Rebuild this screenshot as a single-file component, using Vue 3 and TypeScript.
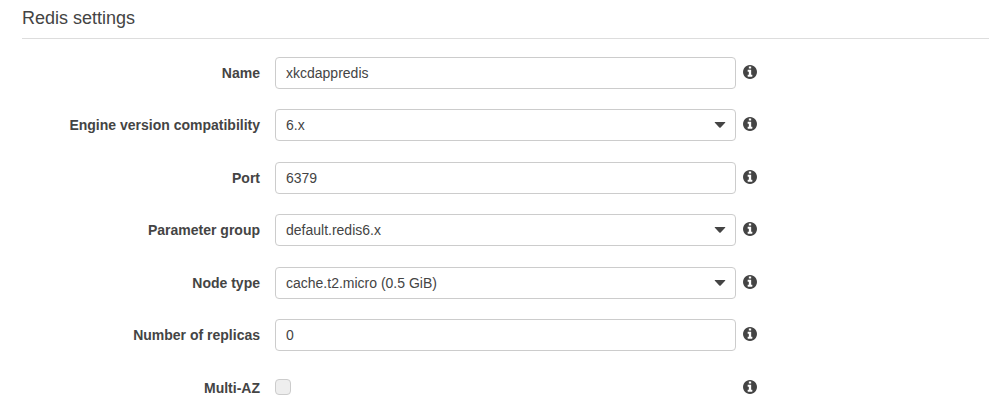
<script setup lang="ts">
import { reactive } from 'vue'

interface Field {
  id: string
  label: string
  kind: 'text' | 'select' | 'checkbox'
  options?: string[]
}

const fields: Field[] = [
  { id: 'name', label: 'Name', kind: 'text' },
  { id: 'engine', label: 'Engine version compatibility', kind: 'select', options: ['6.x'] },
  { id: 'port', label: 'Port', kind: 'text' },
  { id: 'group', label: 'Parameter group', kind: 'select', options: ['default.redis6.x'] },
  { id: 'node', label: 'Node type', kind: 'select', options: ['cache.t2.micro (0.5 GiB)'] },
  { id: 'replicas', label: 'Number of replicas', kind: 'text' },
  { id: 'multiaz', label: 'Multi-AZ', kind: 'checkbox' },
]

const values = reactive<Record<string, string>>({
  name: 'xkcdappredis',
  engine: '6.x',
  port: '6379',
  group: 'default.redis6.x',
  node: 'cache.t2.micro (0.5 GiB)',
  replicas: '0',
})
</script>

<template>
  <section class="settings">
    <h2 class="title">Redis settings</h2>
    <form class="form" @submit.prevent>
      <div v-for="field in fields" :key="field.id" class="row">
        <label :id="`${field.id}-label`" class="label" :for="field.id">{{ field.label }}</label>
        <div class="control">
          <input v-if="field.kind === 'text'" :id="field.id" v-model="values[field.id]" class="box" type="text" />
          <div v-else-if="field.kind === 'select'" class="select">
            <select :id="field.id" v-model="values[field.id]" class="box">
              <option v-for="option in field.options" :key="option">{{ option }}</option>
            </select>
            <svg class="caret" viewBox="0 0 12 6" aria-hidden="true">
              <path d="M1.2 0H10.8Q11.8 0 11.1 .8L6.7 5.5Q6 6.2 5.3 5.5L.9 .8Q.2 0 1.2 0Z" />
            </svg>
          </div>
          <input v-else :id="field.id" class="check" type="checkbox" disabled />
        </div>
        <button class="info" type="button" :aria-labelledby="`${field.id}-label`">
          <svg viewBox="0 128 1536 1536" aria-hidden="true">
            <path d="M1024 1376v-160q0-14-9-23t-23-9h-96v-512q0-14-9-23t-23-9h-320q-14 0-23 9t-9 23v160q0 14 9 23t23 9h96v320h-96q-14 0-23 9t-9 23v160q0 14 9 23t23 9h448q14 0 23-9t9-23zm-128-896v-160q0-14-9-23t-23-9h-192q-14 0-23 9t-9 23v160q0 14 9 23t23 9h192q14 0 23-9t9-23zm640 416q0 209-103 385.5t-279.5 279.5-385.5 103-385.5-103-279.5-279.5-103-385.5 103-385.5 279.5-279.5 385.5-103 385.5 103 279.5 279.5 103 385.5z" />
          </svg>
        </button>
      </div>
    </form>
  </section>
</template>

<style>
body {
  margin: 0;
  background: #fff;
}
</style>

<style scoped>
.settings {
  padding: 0 0 10px 22px;
  color: #444;
  font-family: "Liberation Sans", Arial, sans-serif;
  font-size: 14px;
  line-height: 20px;
}

.title {
  margin: 0;
  padding: 6px 0 8px;
  border-bottom: 1px solid #ddd;
  font-size: 18px;
  font-weight: 400;
  line-height: 24px;
}

.form {
  padding-top: 18px;
}

.row {
  display: grid;
  grid-template-columns: 238px minmax(0, 461px) 14px;
  align-items: center;
  min-height: 32px;
  margin-bottom: 20px;
}

.row:nth-child(even) {
  margin-bottom: 21px;
}

.label {
  font-weight: 700;
  text-align: right;
}

.control {
  display: flex;
  margin-left: 15px;
  width: 100%;
}

.box {
  box-sizing: border-box;
  width: 100%;
  height: 32px;
  margin: 0;
  padding: 0 10px;
  border: 1px solid #ccc;
  border-radius: 4px;
  background: #fff;
  color: #444;
  font: inherit;
  appearance: none;
}

.select {
  position: relative;
  width: 100%;
}

.select .box {
  display: block;
}

.caret {
  position: absolute;
  top: 13px;
  right: 10px;
  width: 12px;
  height: 6px;
  fill: #444;
  pointer-events: none;
}

.check {
  box-sizing: border-box;
  width: 16px;
  height: 16px;
  margin: 0 0 2px;
  border: 1px solid #ccc;
  border-radius: 4px;
  background: #eee;
  appearance: none;
}

.info {
  display: block;
  width: 14px;
  height: 14px;
  margin: 0 0 2px 22px;
  padding: 0;
  border: 0;
  background: none;
}

.info svg {
  display: block;
  width: 14px;
  height: 14px;
  fill: #444;
}
</style>
